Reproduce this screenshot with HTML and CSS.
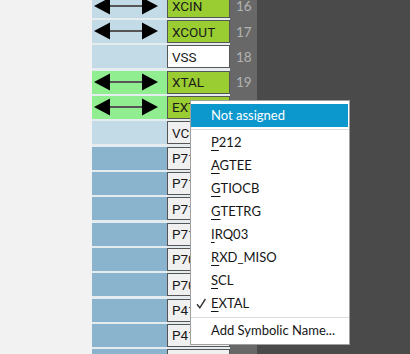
FILE: index.html
```html
<!DOCTYPE html>
<html>
<head>
<meta charset="utf-8">
<link rel="stylesheet" href="styles.css">
</head>
<body>
<div class="app">
  <div class="side"></div>
  <div class="table">
    <div class="row"><div class="cell c-lb"><svg class="arrow" viewBox="0 0 75 23"><line x1="16" y1="11" x2="58" y2="11"/><polygon points="2,11 18,2.5 18,19.5"/><polygon points="66,11 50,2.5 50,19.5"/></svg></div><div class="name n-green">XCIN</div></div>
    <div class="row"><div class="cell c-lb"><svg class="arrow" viewBox="0 0 75 23"><line x1="16" y1="11" x2="58" y2="11"/><polygon points="2,11 18,2.5 18,19.5"/><polygon points="66,11 50,2.5 50,19.5"/></svg></div><div class="name n-green">XCOUT</div></div>
    <div class="row"><div class="cell c-lb"></div><div class="name n-white">VSS</div></div>
    <div class="row"><div class="cell c-green"><svg class="arrow" viewBox="0 0 75 23"><line x1="16" y1="11" x2="58" y2="11"/><polygon points="2,11 18,2.5 18,19.5"/><polygon points="66,11 50,2.5 50,19.5"/></svg></div><div class="name n-green">XTAL</div></div>
    <div class="row"><div class="cell c-green"><svg class="arrow" viewBox="0 0 75 23"><line x1="16" y1="11" x2="58" y2="11"/><polygon points="2,11 18,2.5 18,19.5"/><polygon points="66,11 50,2.5 50,19.5"/></svg></div><div class="name n-green">EXTAL</div></div>
    <div class="row"><div class="cell c-lb"></div><div class="name n-gray">VCC</div></div>
    <div class="row"><div class="cell c-db"></div><div class="name n-gray">P715</div></div>
    <div class="row"><div class="cell c-db"></div><div class="name n-gray">P714</div></div>
    <div class="row"><div class="cell c-db"></div><div class="name n-gray">P713</div></div>
    <div class="row"><div class="cell c-db"></div><div class="name n-gray">P712</div></div>
    <div class="row"><div class="cell c-db"></div><div class="name n-gray">P709</div></div>
    <div class="row"><div class="cell c-db"></div><div class="name n-gray">P708</div></div>
    <div class="row"><div class="cell c-db"></div><div class="name n-gray">P415</div></div>
    <div class="row"><div class="cell c-db"></div><div class="name n-gray">P414</div></div>
    <div class="row"><div class="cell c-db"></div><div class="name n-gray">P413</div></div>
  </div>
  <div class="nums">
    <div class="num">16</div><div class="num">17</div><div class="num">18</div><div class="num">19</div><div class="num">20</div>
    <div class="num">21</div><div class="num">22</div><div class="num">23</div><div class="num">24</div><div class="num">25</div>
    <div class="num">26</div><div class="num">27</div><div class="num">28</div><div class="num">29</div><div class="num">30</div>
  </div>
  <div class="dark"></div>

  <div class="menu">
    <div class="item active">Not assigned</div>
    <div class="sep"></div>
    <div class="item"><span class="mn">P</span>212</div>
    <div class="item"><span class="mn">A</span>GTEE</div>
    <div class="item"><span class="mn">G</span>TIOCB</div>
    <div class="item"><span class="mn">G</span>TETRG</div>
    <div class="item"><span class="mn">I</span>RQ03</div>
    <div class="item"><span class="mn">R</span>XD_MISO</div>
    <div class="item"><span class="mn">S</span>CL</div>
    <div class="item"><svg class="check" viewBox="0 0 10 11"><path d="M1 6.2 L3.8 9.8 L9.4 1"/></svg><span class="mn">E</span>XTAL</div>
    <div class="sep"></div>
    <div class="item">Add Symbolic Name...</div>
  </div>
</div>
</body>
</html>
```

FILE: styles.css
```css
html, body {
  margin: 0;
  padding: 0;
}
body {
  width: 410px;
  height: 354px;
  overflow: hidden;
  background: #4a4a4a;
  font-family: "Lato", "Noto Sans", sans-serif;
}
.app {
  position: relative;
  display: flex;
  height: 354px;
  overflow: hidden;
}
.side {
  width: 92px;
  flex: none;
  background: #f2f2f2;
}
.table {
  width: 138px;
  flex: none;
  margin-top: -5.333px;
  display: flex;
  flex-direction: column;
  gap: 2.333px;
  background: #e4ecf0;
  align-self: flex-start;
}
.row {
  display: flex;
  height: 23px;
  flex: none;
}
.cell {
  width: 75px;
  flex: none;
  display: flex;
  align-items: center;
}
.c-lb { background: #c3dae7; }
.c-green { background: #90ee90; }
.c-db { background: #8ab4ce; }
.arrow {
  width: 75px;
  height: 23px;
  display: block;
}
.arrow line {
  stroke: #555;
  stroke-width: 2;
}
.arrow polygon {
  fill: #000;
}
.name {
  width: 63px;
  flex: none;
  box-sizing: border-box;
  border: 1px solid #555;
  padding-left: 4px;
  display: flex;
  align-items: center;
  font-family: "Roboto", "Lato", sans-serif;
  font-size: 13.5px;
  color: #1a1a1a;
  white-space: nowrap;
  overflow: hidden;
}
.n-green { background: #9acd32; }
.n-white { background: #ffffff; }
.n-gray { background: #f0f0f0; }
.nums {
  width: 27px;
  flex: none;
  background: #686868;
  margin-top: -5.333px;
  display: flex;
  flex-direction: column;
  gap: 2.333px;
  align-self: stretch;
}
.num {
  height: 23px;
  flex: none;
  display: flex;
  align-items: center;
  padding-left: 6px;
  font-size: 13.5px;
  color: #b3b3b3;
}
.dark {
  flex: 1;
  background: #4a4a4a;
}
.menu {
  position: absolute;
  left: 190px;
  top: 100px;
  width: 160px;
  box-sizing: border-box;
  background: #ffffff;
  border: 1px solid #a0a0a0;
  padding: 3px 0 2px 0;
}
.item {
  position: relative;
  height: 23px;
  line-height: 23px;
  padding-left: 20px;
  font-size: 13px;
  color: #151515;
  white-space: nowrap;
}
.item.active {
  background: #0c97cd;
  color: #ffffff;
  margin-right: 1px;
}
.sep {
  height: 4px;
  display: flex;
  align-items: center;
}
.sep::before {
  content: "";
  display: block;
  width: 100%;
  height: 1px;
  background: #dcdcdc;
}
.mn {
  text-decoration: underline;
  text-underline-offset: 3px;
}
.check {
  position: absolute;
  left: 5px;
  top: 6px;
  width: 10px;
  height: 11px;
}
.check path {
  fill: none;
  stroke: #333;
  stroke-width: 1.4;
}
```
